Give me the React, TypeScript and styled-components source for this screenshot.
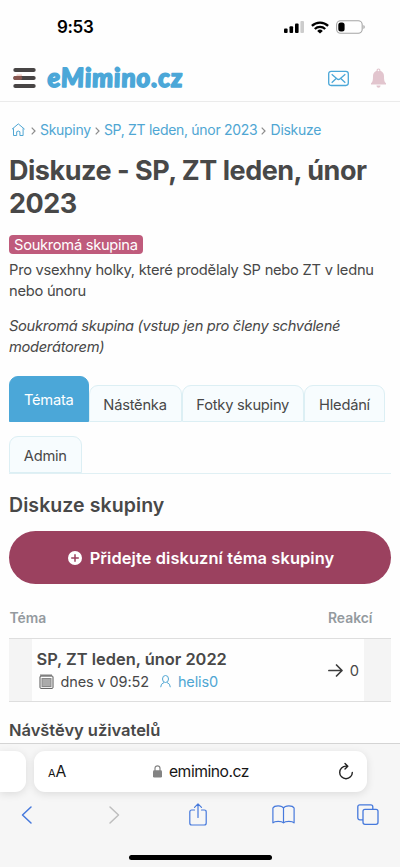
import React from "react";
import styled, { createGlobalStyle } from "styled-components";

const Global = createGlobalStyle`
  * { box-sizing: border-box; }
  html, body { margin: 0; padding: 0; background: #fefefe; }
  body { font-family: Inter, "Liberation Sans", sans-serif; color: #484848; overflow: hidden; }
  h1, h2, p { margin: 0; }
  svg { display: block; flex: none; overflow: visible; }
`;

const Screen = styled.div`
  width: 400px;
  height: 867px;
  display: flex;
  flex-direction: column;
  overflow: hidden;
  background: #fefefe;
`;

const StatusBar = styled.div`
  height: 55px;
  flex: none;
  display: flex;
  justify-content: space-between;
  padding: 0 35px 0 57px;
`;

const Clock = styled.div`
  font-size: 17px;
  line-height: 55px;
  font-weight: 600;
  letter-spacing: -0.35px;
  color: #000;
`;

const StatusIcons = styled.div`
  height: 54px;
  display: flex;
  align-items: center;
  gap: 7px;
`;

const Header = styled.header`
  height: 47px;
  flex: none;
  display: flex;
  align-items: center;
  padding: 0 13px;
  border-bottom: 1.5px solid #ebebeb;
`;

const Logo = styled.svg`
  margin-left: 12px;
  margin-right: auto;
`;

const HeaderIcons = styled.div`
  display: flex;
  align-items: center;
  gap: 21px;
`;

const Main = styled.main`
  height: 641px;
  flex: none;
  overflow: hidden;
  padding: 0 9px;
`;

const Breadcrumbs = styled.nav`
  height: 20px;
  margin-top: 18px;
  display: flex;
  align-items: center;
  font-size: 14px;
  line-height: 20px;
  letter-spacing: -0.3px;
  white-space: nowrap;
  color: #4fa6d3;
`;

const Separator = styled.svg`
  margin: 1px 4.2px 0 4px;
`;

const Title = styled.h1`
  margin-top: 14px;
  font-size: 27px;
  line-height: 33px;
  font-weight: 700;
  letter-spacing: -0.48px;
  white-space: nowrap;
`;

const Badge = styled.span`
  display: block;
  width: 134px;
  height: 19px;
  margin-top: 15px;
  padding-left: 5px;
  border-radius: 4px;
  background: #bf5b7c;
  color: #fff;
  font-size: 14.7px;
  line-height: 20px;
  letter-spacing: -0.29px;
  white-space: nowrap;
`;

const Paragraph = styled.p<{ $italic?: boolean }>`
  margin-top: ${(p) => (p.$italic ? 15 : 6)}px;
  font-size: 14.7px;
  line-height: 20.5px;
  font-style: ${(p) => (p.$italic ? "italic" : "normal")};
  letter-spacing: ${(p) => (p.$italic ? -0.32 : -0.25)}px;
  white-space: nowrap;
`;

const Tabs = styled.div`
  height: 98px;
  margin-top: 19px;
  display: flex;
  flex-wrap: wrap;
  align-items: flex-end;
  align-content: space-between;
  border-bottom: 1.5px solid #e0f0f4;
`;

const Tab = styled.div<{ $w: number; $active?: boolean }>`
  width: ${(p) => p.$w}px;
  height: ${(p) => (p.$active ? 46 : 37.5)}px;
  line-height: ${(p) => (p.$active ? 46 : 38)}px;
  border: 1px solid ${(p) => (p.$active ? "#4ba7d8" : "#dceff4")};
  border-radius: 9px 9px 0 0;
  background: ${(p) => (p.$active ? "#4ba7d8" : "#f7fcfe")};
  color: ${(p) => (p.$active ? "#fff" : "#484848")};
  font-size: 14.7px;
  letter-spacing: -0.24px;
  text-align: center;
  white-space: nowrap;
`;

const SectionTitle = styled.h2<{ $size: number; $top: number; $track: number }>`
  margin-top: ${(p) => p.$top}px;
  font-size: ${(p) => p.$size}px;
  line-height: 26px;
  font-weight: 600;
  letter-spacing: ${(p) => p.$track}px;
  white-space: nowrap;
`;

const AddButton = styled.div`
  height: 53px;
  margin-top: 13px;
  border-radius: 27px;
  background: #9b415f;
  color: #fff;
  display: flex;
  align-items: center;
  justify-content: center;
  gap: 8px;
  padding-left: 2px;
  font-size: 16.4px;
  letter-spacing: 0.1px;
  font-weight: 600;
  white-space: nowrap;
`;

const TableHead = styled.div`
  height: 54px;
  padding: 24px 18.5px 0 0.5px;
  display: flex;
  justify-content: space-between;
  font-size: 13.9px;
  line-height: 20px;
  font-weight: 600;
  color: #949a9f;
`;

const TopicRow = styled.div`
  height: 64px;
  display: flex;
  border: solid #dedede;
  border-width: 1px 0;
  background: #f4f4f4;
  padding: 0 27px 0 22.5px;
`;

const TopicCell = styled.div`
  flex: 1;
  display: flex;
  justify-content: space-between;
  align-items: center;
  padding: 1px 5px 0;
  background: #fefefe;
`;

const TopicName = styled.div`
  font-size: 16.4px;
  line-height: 22px;
  font-weight: 600;
  white-space: nowrap;
`;

const TopicMeta = styled.div`
  display: flex;
  align-items: center;
  height: 24px;
  padding-left: 2px;
  font-size: 14.5px;
  letter-spacing: -0.12px;
  white-space: nowrap;
`;

const MetaText = styled.span<{ $link?: boolean }>`
  margin-left: 7px;
  margin-right: ${(p) => (p.$link ? 0 : 11)}px;
  color: ${(p) => (p.$link ? "#4fa6d3" : "#484848")};
`;

const Replies = styled.div`
  display: flex;
  align-items: center;
  gap: 7px;
  font-size: 14.7px;
`;

const BrowserBar = styled.footer`
  height: 124px;
  flex: none;
  border-top: 1px solid #d4d4d4;
  background: #f6f6f6;
  display: flex;
  flex-direction: column;
  align-items: center;
`;

const AddressRow = styled.div`
  width: 400px;
  height: 48px;
  flex: none;
  padding-top: 7px;
  display: flex;
  gap: 8px;
`;

const PreviousPage = styled.div`
  width: 26px;
  height: 41px;
  border-radius: 0 11px 11px 0;
  background: #fff;
  box-shadow: 0 2px 9px rgba(0, 0, 0, 0.11);
`;

const AddressField = styled.div`
  width: 333px;
  height: 41px;
  border-radius: 11px;
  background: #fff;
  box-shadow: 0 2px 9px rgba(0, 0, 0, 0.11);
  display: flex;
  align-items: center;
  justify-content: space-between;
  padding: 0 13.5px 0 14px;
  color: #161616;
`;

const TextSize = styled.div`
  padding-top: 1px;
  font-size: 15.7px;
  line-height: 20px;
  letter-spacing: -0.2px;
`;

const SmallA = styled.span`
  font-size: 11px;
`;

const Domain = styled.div`
  display: flex;
  align-items: center;
  gap: 6.5px;
  margin-left: -2px;
  font-size: 15.7px;
  letter-spacing: -0.47px;
`;

const Toolbar = styled.div`
  width: 400px;
  height: 45px;
  flex: none;
  display: grid;
  grid-template-columns: 54px 120px 48px 122px 48px;
  justify-items: center;
  align-items: center;
`;

const HomeIndicator = styled.div`
  width: 143px;
  height: 5px;
  margin-top: 18px;
  border-radius: 3px;
  background: #000;
`;

const Chevron = () => (
  <Separator width="5" height="8" viewBox="0 0 5 8" fill="none" stroke="#8c8c8c" strokeWidth="1.2">
    <path d="M.7.7 4 4 .7 7.3" />
  </Separator>
);

export default function App() {
  return (
    <Screen>
      <Global />
      <StatusBar>
        <Clock>9:53</Clock>
        <StatusIcons>
          <svg width="20" height="12" viewBox="0 0 20 12">
            <rect x="0" y="7.5" width="3.6" height="4.5" rx="1" />
            <rect x="5.5" y="5.2" width="3.6" height="6.8" rx="1" />
            <rect x="11" y="2.5" width="3.6" height="9.5" rx="1" />
            <rect x="16.4" y="0" width="3.6" height="12" rx="1" fill="#ccc" />
          </svg>
          <svg width="18" height="13" viewBox="0 0 18 13" fill="none" stroke="#000" strokeWidth="2.3">
            <path d="M.9 4.8a11.7 11.7 0 0 1 16.2 0M3.8 8a7.5 7.5 0 0 1 10.4 0" />
            <path d="M9 12.6 6.2 9.9a4 4 0 0 1 5.6 0Z" fill="#000" stroke="none" />
          </svg>
          <svg width="29" height="14" viewBox="0 0 29 14">
            <rect x=".6" y=".8" width="25.6" height="12.4" rx="4" fill="none" stroke="#a5a5a5" strokeWidth="1.1" />
            <rect x="2.3" y="2.5" width="6.3" height="9" rx="2.5" />
            <path d="M27.4 5v4q1.4-.6 1.4-2t-1.4-2" fill="#a5a5a5" />
          </svg>
        </StatusIcons>
      </StatusBar>
      <Header>
        <svg width="23" height="22" viewBox="0 0 23 22" fill="none" stroke="#484545" strokeWidth="4" strokeLinecap="round">
          <path d="M2.3 3h18.4M2.3 11h18.4M2.3 19h18.4" />
          <path d="M2.3 11h5" stroke="#87564f" />
          <path d="M4 8.2h4.500" stroke="#eac0b7" strokeWidth="1.200" />
        </svg>
        <Logo width="136" height="32" viewBox="0 0 136 32">
          <text
            transform="translate(0 25.2) skewX(5)"
            x="0"
            y="0"
            textLength="135"
            lengthAdjust="spacing"
            fontFamily="Lato, sans-serif"
            fontWeight="900"
            fontStyle="italic"
            fontSize="26.5"
            fill="#4ba7d8"
            stroke="#4ba7d8"
            strokeWidth="1.4"
            strokeLinejoin="round"
          >
            eMimino.cz
          </text>
        </Logo>
        <HeaderIcons>
          <svg width="22" height="16" viewBox="0 0 22 16" fill="none" stroke="#4ba7d8" strokeWidth="1.3">
            <rect x=".7" y="1.3" width="19.6" height="14.2" rx="2.4" />
            <path d="m3.700 4.300 5.200 4.500q1.600 1.400 3.200 0l5.200-4.500M3.700 12.700l4.200-4M17.300 12.700l-4.200-4" />
          </svg>
          <svg width="16" height="21" viewBox="0 0 16 21" fill="#e2c5ce">
            <path d="M7.500.5c1.300 0 2 .9 1.900 2.300 2.600.9 3.600 3 3.600 5.500 0 4 .3 5.800 2 7v1.200H0v-1.200c1.700-1.200 2-3 2-7 0-2.500 1-4.600 3.600-5.500C5.500 1.400 6.200.5 7.500.5Z" />
            <path d="M5.500 17.500h4c0 3-4 3-4 0Z" />
            <circle cx="7.5" cy="2.4" r=".8" fill="#fff" />
          </svg>
        </HeaderIcons>
      </Header>
      <Main>
        <Breadcrumbs>
          <svg width="17.8" height="14" viewBox="0 0 17.8 14" fill="none" stroke="#4fa6d3" strokeWidth="1">
            <path d="M3 6.200 9.300.900l6.300 5.300M4.500 5.300v7.200h3.200V8.700q1.600-1.300 3.200 0v3.800h3.200V5.300" />
          </svg>
          <Chevron />
          <span>Skupiny</span>
          <Chevron />
          <span>SP, ZT leden, únor 2023</span>
          <Chevron />
          <span>Diskuze</span>
        </Breadcrumbs>
        <Title>
          Diskuze - SP, ZT leden, únor
          <br />
          2023
        </Title>
        <Badge>Soukromá skupina</Badge>
        <Paragraph>
          Pro vsexhny holky, které prodělaly SP nebo ZT v lednu
          <br />
          nebo únoru
        </Paragraph>
        <Paragraph $italic>
          Soukromá skupina (vstup jen pro členy schválené
          <br />
          moderátorem)
        </Paragraph>
        <Tabs>
          <Tab $w={79.5} $active>Témata</Tab>
          <Tab $w={93}>Nástěnka</Tab>
          <Tab $w={122.5}>Fotky skupiny</Tab>
          <Tab $w={81}>Hledání</Tab>
          <Tab $w={72.5}>Admin</Tab>
        </Tabs>
        <SectionTitle $size={19.5} $top={18} $track={0.08}>Diskuze skupiny</SectionTitle>
        <AddButton>
          <svg width="14" height="14" viewBox="0 0 14 14">
            <circle cx="7" cy="7" r="7" fill="#fff" />
            <path d="M7 3.200v7.600M3.200 7h7.600" stroke="#9b415f" strokeWidth="1.500" />
          </svg>
          <span>Přidejte diskuzní téma skupiny</span>
        </AddButton>
        <TableHead>
          <span>Téma</span>
          <span>Reakcí</span>
        </TableHead>
        <TopicRow>
          <TopicCell>
            <div>
              <TopicName>SP, ZT leden, únor 2022</TopicName>
              <TopicMeta>
                <svg width="15" height="15" viewBox="0 0 15 15" fill="none" stroke="#555">
                  <rect x="1" y="2" width="13" height="12.4" rx="1" />
                  <rect x="3" y="4.5" width="9" height="8" fill="#aaa" stroke="#888" />
                  <path d="M1.500 1.300h12" strokeDasharray="1 1" strokeWidth="2" />
                </svg>
                <MetaText>dnes v 09:52</MetaText>
                <svg width="11" height="13" viewBox="0 0 11 13" fill="none" stroke="#4fa6d3">
                  <ellipse cx="5.5" cy="4" rx="3" ry="3.5" />
                  <path d="M.7 12.200q0-3.500 3.300-4.700M10.300 12.200q0-3.500-3.300-4.700" />
                </svg>
                <MetaText $link>helis0</MetaText>
              </TopicMeta>
            </div>
            <Replies>
              <svg width="15" height="13" viewBox="0 0 15 13" fill="none" stroke="#3c3c3c" strokeWidth="1.7" strokeLinecap="round" strokeLinejoin="round">
                <path d="M.9 6.500h13M8.500 1l5.500 5.500L8.500 12" />
              </svg>
              <span>0</span>
            </Replies>
          </TopicCell>
        </TopicRow>
        <SectionTitle $size={16.5} $top={15} $track={-0.03}>Návštěvy uživatelů</SectionTitle>
      </Main>
      <BrowserBar>
        <AddressRow>
          <PreviousPage />
          <AddressField>
            <TextSize>
              <SmallA>A</SmallA>A
            </TextSize>
            <Domain>
              <svg width="9" height="13" viewBox="0 0 9 13">
                <rect x="0" y="5.3" width="9" height="7.2" rx="1.3" fill="#838383" />
                <path d="M2 6V3.300a2.500 2.500 0 0 1 5 0V6" fill="none" stroke="#838383" strokeWidth="1.2" />
              </svg>
              <span>emimino.cz</span>
            </Domain>
            <svg width="15" height="17" viewBox="0 0 15 17" fill="none" stroke="#222" strokeWidth="1.4" strokeLinecap="round" strokeLinejoin="round">
              <path d="M9.500 3.100H8A6.300 6.300 0 1 0 14.300 9.400M7 .4l2.800 2.800L7 6" />
            </svg>
          </AddressField>
        </AddressRow>
        <Toolbar>
          <svg width="12" height="18" viewBox="0 0 12 18" fill="none" stroke="#4679dc" strokeWidth="1.5" strokeLinecap="round" strokeLinejoin="round">
            <path d="M10 1 1.500 9l8.500 8" />
          </svg>
          <svg width="12" height="18" viewBox="0 0 12 18" fill="none" stroke="#bebebe" strokeWidth="1.5" strokeLinecap="round" strokeLinejoin="round">
            <path d="m2 1 8.500 8L2 17" />
          </svg>
          <svg width="18" height="23" viewBox="0 0 18 23" fill="none" stroke="#4679dc" strokeWidth="1.2" strokeLinecap="round" strokeLinejoin="round">
            <path d="M5.500 7H2.700Q.8 7 .8 9v11q0 2 1.900 2h12.600q1.900 0 1.900-2V9q0-2-1.900-2h-2.800M9 14.500V1M5.500 4.300 9 .8l3.500 3.500" />
          </svg>
          <svg width="23" height="19" viewBox="0 0 23 19" fill="none" stroke="#4679dc" strokeWidth="1.2" strokeLinejoin="round">
            <path d="M11.500 17.800V3C10 .2 2.500 0 .9 3v14.800c1.700-1.800 8.900-1.800 10.600 0 1.700-1.800 8.900-1.800 10.600 0V3c-1.600-3-9.100-2.800-10.600 0" />
          </svg>
          <svg width="22" height="21" viewBox="0 0 22 21" fill="#f6f6f6" stroke="#4679dc" strokeWidth="1.3">
            <rect x=".8" y=".8" width="15" height="15" rx="2" />
            <rect x="6" y="5.3" width="15" height="15" rx="2" />
          </svg>
        </Toolbar>
        <HomeIndicator />
      </BrowserBar>
    </Screen>
  );
}
